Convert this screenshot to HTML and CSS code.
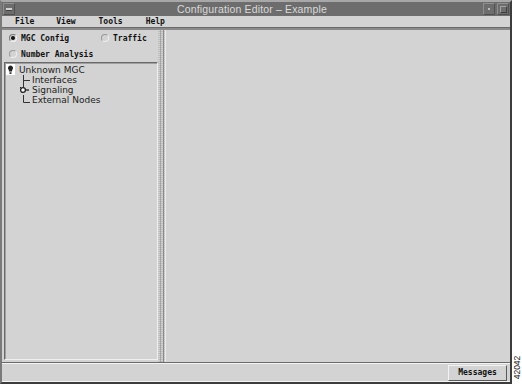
FILE: index.html
```html
<!DOCTYPE html>
<html>
<head>
<meta charset="utf-8">
<link rel="stylesheet" href="styles.css">
</head>
<body>
<div class="window">
  <div class="titlebar">
    <span class="tbtn tbtn-menu"><span class="dash"></span></span>
    <span class="title">Configuration Editor – Example</span>
    <span class="tbtn tbtn-min"><span class="dot"></span></span>
    <span class="tbtn tbtn-max"><span class="sq"></span></span>
  </div>
  <div class="menubar">
    <span class="menu m-file">File</span>
    <span class="menu m-view">View</span>
    <span class="menu m-tools">Tools</span>
    <span class="menu m-help">Help</span>
  </div>
  <div class="main">
    <div class="left">
      <div class="radios">
        <div class="rrow">
          <label class="radio r1"><span class="rb on"></span>MGC Config</label>
          <label class="radio r2"><span class="rb"></span>Traffic</label>
        </div>
        <div class="rrow">
          <label class="radio r1"><span class="rb"></span>Number Analysis</label>
        </div>
      </div>
      <div class="tree">
        <div class="node root">
          <svg class="ico" width="9" height="11" viewBox="0 0 9 11"><rect width="9" height="11" fill="#fff"/><path d="M4.5 1.5a2.6 2.6 0 0 1 1.6 4.6v1.4H2.9V6.1A2.6 2.6 0 0 1 4.5 1.5z" fill="#222"/><rect x="3.5" y="8.3" width="2" height="1.6" fill="#222"/></svg>
          <span class="lbl">Unknown MGC</span>
        </div>
        <div class="node child">
          <svg class="conn" width="13" height="10" viewBox="0 0 13 10"><path d="M4.5 0V10M4.5 5.5H11" stroke="#333" fill="none"/></svg>
          <span class="lbl">Interfaces</span>
        </div>
        <div class="node child">
          <svg class="conn" width="13" height="10" viewBox="0 0 13 10"><path d="M4.5 0V3" stroke="#333" fill="none"/><circle cx="4" cy="5" r="2.4" fill="#fff" stroke="#222" stroke-width="1.3"/><path d="M6 5H10" stroke="#222" stroke-width="1.3"/><path d="M1 2L2.5 3.5" stroke="#222"/></svg>
          <span class="lbl">Signaling</span>
        </div>
        <div class="node child">
          <svg class="conn" width="13" height="10" viewBox="0 0 13 10"><path d="M4.5 0V7.5H11" stroke="#333" fill="none"/></svg>
          <span class="lbl">External Nodes</span>
        </div>
      </div>
    </div>
    <div class="splitter"></div>
    <div class="right"></div>
  </div>
  <div class="status">
    <div class="msgarea"></div>
    <button class="msgbtn">Messages</button>
  </div>
</div>
<div class="figno">42042</div>
</body>
</html>
```
FILE: styles.css
```css
html, body {
  margin: 0;
  padding: 0;
  background: #fff;
}
body {
  width: 522px;
  height: 384px;
  position: relative;
  overflow: hidden;
  font-family: "DejaVu Sans", sans-serif;
}
.window {
  box-sizing: border-box;
  width: 512px;
  height: 384px;
  background: #d3d3d3;
  border-top: 2px solid #a8a8a8;
  border-left: 2px solid #7a7a7a;
  border-right: 2px solid #3c3c3c;
  border-bottom: 2px solid #3c3c3c;
  display: flex;
  flex-direction: column;
}
.titlebar {
  height: 14px;
  background: #6d6d6d;
  display: flex;
  align-items: center;
  padding: 0 1px 0 1px;
  gap: 1px;
}
.tbtn {
  box-sizing: border-box;
  width: 12px;
  height: 12px;
  border: 1px solid;
  border-color: #8e8e8e #505050 #505050 #8e8e8e;
  background: #6d6d6d;
  display: flex;
  align-items: center;
  justify-content: center;
  flex: none;
}
.dash {
  width: 6px;
  height: 2px;
  background: #cfcfcf;
  border-bottom: 1px solid #444;
}
.dot {
  width: 2px;
  height: 2px;
  background: #bbb;
}
.sq {
  box-sizing: border-box;
  width: 7px;
  height: 7px;
  border: 1px solid;
  border-color: #a0a0a0 #3f3f3f #3f3f3f #a0a0a0;
}
.tbtn-max {
  margin-left: 1px;
}
.title {
  flex: 1;
  text-align: center;
  color: #dadada;
  font-family: "Liberation Sans", sans-serif;
  font-size: 10.5px;
  letter-spacing: 0.15px;
  padding-left: 6px;
  line-height: 14px;
}
.menubar {
  height: 12px;
  border-bottom: 2px solid;
  border-color: #8a8a8a;
  box-shadow: inset 0 -1px 0 #6a6a6a;
  display: flex;
  align-items: center;
  font-family: "DejaVu Sans Mono", monospace;
  font-weight: bold;
  font-size: 8px;
  color: #111;
  line-height: 12px;
}
.menu {
  flex: none;
}
.m-file { margin-left: 13px; }
.m-view { margin-left: 22px; }
.m-tools { margin-left: 23px; }
.m-help { margin-left: 23px; }
.main {
  height: 332px;
  display: flex;
  flex: none;
}
.left {
  width: 156px;
  flex: none;
  display: flex;
  flex-direction: column;
  box-sizing: border-box;
  padding: 0 0 2px 2px;
}
.radios {
  height: 32px;
  display: flex;
  flex-direction: column;
}
.rrow {
  height: 16px;
  display: flex;
  align-items: center;
}
.radio {
  display: flex;
  align-items: center;
  font-family: "DejaVu Sans Mono", monospace;
  font-weight: bold;
  font-size: 8px;
  color: #111;
  gap: 4px;
}
.r1 { margin-left: 5px; width: 92px; }
.r2 { margin-left: 0; }
.rb {
  box-sizing: border-box;
  width: 8px;
  height: 8px;
  border-radius: 50%;
  border: 1px solid;
  border-color: #9a9a9a #eeeeee #eeeeee #9a9a9a;
  background: #d3d3d3;
  display: flex;
  align-items: center;
  justify-content: center;
}
.rb.on {
  border-color: #777 #f2f2f2 #f2f2f2 #777;
}
.rb.on::after {
  content: "";
  width: 4px;
  height: 4px;
  border-radius: 50%;
  background: #111;
}
.tree {
  flex: 1;
  box-sizing: border-box;
  border: 1px solid;
  border-color: #6a6a6a #f0f0f0 #f0f0f0 #6a6a6a;
  box-shadow: inset 1px 1px 0 #a0a0a0;
  padding-top: 1px;
}
.node {
  height: 10px;
  display: flex;
  align-items: center;
  font-family: "DejaVu Sans", sans-serif;
  font-size: 9px;
  color: #222;
  line-height: 10px;
}
.root {
  height: 11px;
  padding-left: 1px;
}
.root .ico {
  margin-right: 4px;
}
.child {
  padding-left: 14px;
}
.conn {
  flex: none;
}
.splitter {
  width: 7px;
  flex: none;
  background:
    linear-gradient(to right, transparent 2px, #a5a5a5 2px, #a5a5a5 3px, transparent 3px, transparent 5px, #8c8c8c 5px, #8c8c8c 6px, transparent 6px),
    repeating-linear-gradient(to bottom, #d3d3d3 0, #d3d3d3 1px, #bdbdbd 1px, #bdbdbd 2px);
}
.right {
  flex: 1;
  background: #d3d3d3;
  border-left: 1px solid #eaeaea;
}
.status {
  height: 20px;
  box-sizing: border-box;
  border-top: 1px solid #6a6a6a;
  border-bottom: 1px solid #f4f4f4;
  box-shadow: inset 0 1px 0 #f4f4f4;
  display: flex;
  align-items: center;
  padding: 0 3px 0 0;
}
.msgarea {
  flex: 1;
}
.msgbtn {
  box-sizing: border-box;
  width: 59px;
  height: 16px;
  margin: 0;
  padding: 0;
  background: #d3d3d3;
  border: 1px solid;
  border-color: #f2f2f2 #5a5a5a #5a5a5a #f2f2f2;
  font-family: "DejaVu Sans Mono", monospace;
  font-weight: bold;
  font-size: 8px;
  color: #111;
  margin-top: 1px;
}
.figno {
  position: absolute;
  left: 504px;
  top: 363px;
  width: 26px;
  height: 9px;
  transform: rotate(-90deg);
  transform-origin: center;
  font-family: "Liberation Sans", sans-serif;
  font-size: 8.5px;
  line-height: 9px;
  color: #222;
  text-align: center;
}
```
